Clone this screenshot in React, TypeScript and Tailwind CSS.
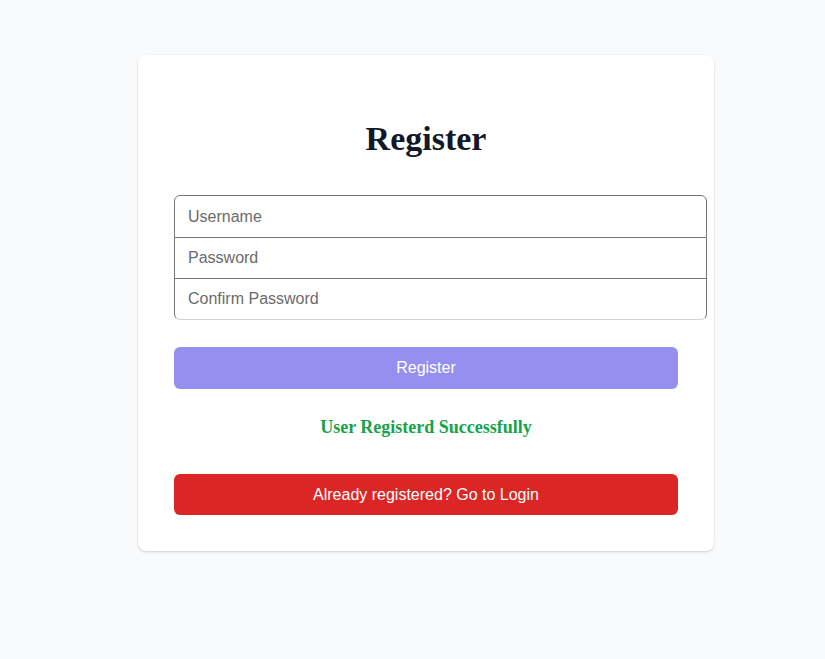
import React from 'react';

export default function App() {
  return (
    <div className="min-h-[659px] bg-gray-50 pt-[55px] pl-[138px]" style={{ fontFamily: '"Liberation Sans", Arial, sans-serif' }}>
      <div className="w-[576px] rounded-lg bg-white px-9 pb-9 shadow-[0_1px_3px_rgba(0,0,0,0.12),0_1px_2px_rgba(0,0,0,0.06)]">
        <h2
          className="pt-[64px] text-center text-[34px] font-bold leading-[39px] text-[#111827]"
          style={{ fontFamily: '"Liberation Serif", "Times New Roman", serif' }}
        >
          Register
        </h2>

        <div className="mt-[37px] flex w-[533px] flex-col">
          <input
            placeholder="Username"
            className="h-[43px] rounded-t-md border border-[#767676] bg-white px-[13px] text-base text-gray-900 outline-none placeholder:text-[#6b6b6b]"
          />
          <input
            placeholder="Password"
            type="password"
            className="h-[41px] border-x border-b border-[#767676] bg-white px-[13px] text-base text-gray-900 outline-none placeholder:text-[#6b6b6b]"
          />
          <input
            placeholder="Confirm Password"
            type="password"
            className="h-[41px] rounded-b-md border-x border-b border-x-[#767676] border-b-[#d1d5db] bg-white px-[13px] text-base text-gray-900 outline-none placeholder:text-[#6b6b6b]"
          />
        </div>

        <button className="mt-[27px] h-[42px] w-full rounded-md bg-[#4f46e5] text-base text-white opacity-60">
          Register
        </button>

        <p
          className="mt-[27px] text-center text-[18px] font-bold leading-[22px] text-[#16a34a]"
          style={{ fontFamily: '"Liberation Serif", "Times New Roman", serif' }}
        >
          User Registerd Successfully
        </p>

        <button className="mt-[36px] h-[41px] w-full rounded-md bg-[#dc2626] text-base text-white">
          Already registered? Go to Login
        </button>
      </div>
    </div>
  );
}
